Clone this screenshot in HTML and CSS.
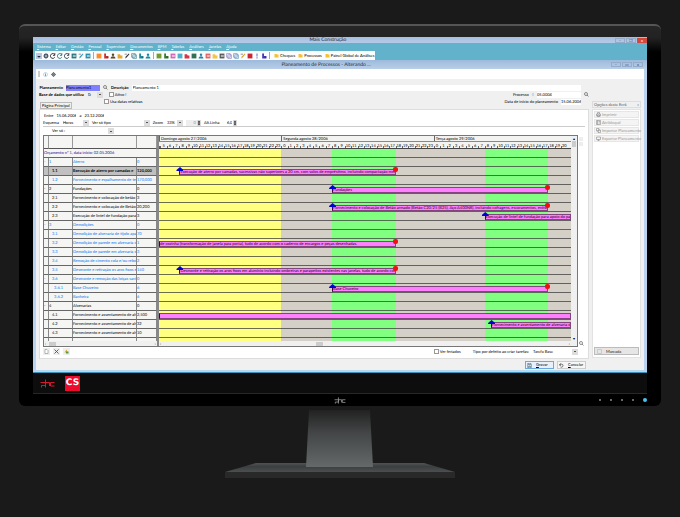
FILE: index.html
```
<!DOCTYPE html>
<html lang="pt">
    <head>
        <meta charset="utf-8">
        <title>Mais Construção</title>
        <link rel="stylesheet" href="styles.css">
    </head>
    <body>
        <div class="monitor">
            <div class="app">
                <header class="titlebar">
                    <span class="title">Mais Construção</span>
                    <div class="winButtons">
                        <button aria-label="Minimizar">–</button>
                        <button aria-label="Restaurar">❐</button>
                        <button class="close" aria-label="Fechar">x</button>
                    </div>
                </header>
                <nav class="menu">
                    <a href="#">Sistema</a>
                    <a href="#">Editar</a>
                    <a href="#">Gestão</a>
                    <a href="#">Pessoal</a>
                    <a href="#">Supervisor</a>
                    <a href="#">Documentos</a>
                    <a href="#">BPM</a>
                    <a href="#">Tabelas</a>
                    <a href="#">Análises</a>
                    <a href="#">Janelas</a>
                    <a href="#">Ajuda</a>
                </nav>
                <div class="toolbar">
                    <div class="tools" id="tools"></div>
                    <button class="shortcut"><svg viewBox="0 0 10 10"><path d="M1 2h4l1 1h3v6H1z" fill="#f2c230"/></svg>Cheques</button>
                    <button class="shortcut"><svg viewBox="0 0 10 10"><path d="M1 2h4l1 1h3v6H1z" fill="#f2c230"/></svg>Processos</button>
                    <button class="shortcut"><svg viewBox="0 0 10 10"><path d="M1 2h4l1 1h3v6H1z" fill="#f2c230"/></svg>Painel Global de Análises</button>
                </div>
                <div class="titlebar child">
                    <span class="title">Planeamento de Processos - Alterando ...</span>
                    <div class="winButtons">
                        <button aria-label="Minimizar">–</button>
                        <button aria-label="Maximizar">▭</button>
                        <button aria-label="Fechar">x</button>
                    </div>
                </div>

                <div class="window">
                    <div class="windowBar">
                        <span class="grip"></span>
                        <button aria-label="Informação"><svg viewBox="0 0 10 10"><circle cx="5" cy="5" r="4" fill="#fff" stroke="#7fb2cc"/><path d="M5 2v1M5 4v4" stroke="#2a7da5" stroke-width="1.4"/></svg></button>
                        <button aria-label="Opções"><svg viewBox="0 0 10 10"><circle cx="5" cy="5" r="3" fill="#fff" stroke="#3e5063" stroke-width="2"/><path d="M5 0v10M0 5h10" stroke="#3e5063"/></svg></button>
                    </div>
                    <div class="columns">
                        <main class="main">
                            <div class="fields">
                                <div class="line">
                                    <label class="strong first" for="plan">Planeamento</label>
                                    <input class="plan" id="plan" value="Planeamento1">
                                    <button class="search" aria-label="Procurar planeamento"><svg viewBox="0 0 10 10"><circle cx="4" cy="4" r="3"/><path d="M6 6l3 3"/></svg></button>
                                    <label class="strong" for="desc">Descrição</label>
                                    <input class="desc" id="desc" value="Planeamento 1">
                                </div>
                                <div class="line">
                                    <label class="strong first" for="base">Base de dados que utiliza</label>
                                    <select class="base" id="base"><option>G</option></select>
                                    <label class="check"><input type="checkbox">Ativo !</label>
                                    <label class="push" for="proc">Processo</label>
                                    <span class="faint">◊</span>
                                    <input class="proc" id="proc" value="05.0004">
                                    <button class="search outside" aria-label="Procurar processo"><svg viewBox="0 0 10 10"><circle cx="4" cy="4" r="3"/><path d="M6 6l3 3"/></svg></button>
                                </div>
                                <div class="line">
                                    <label class="check second"><input type="checkbox">Usa datas relativas</label>
                                    <label class="push" for="start">Data de início do planeamento</label>
                                    <input class="start" id="start" value="15.06.2006">
                                </div>
                            </div>
                            <button class="tab">Página Principal</button>
                            <section class="panel">
                                <div class="filters">
                                    <div class="line">
                                        <label for="from">Entre</label>
                                        <input class="date" id="from" value="15.06.2006">
                                        <label for="to">a</label>
                                        <input class="date" id="to" value="23.12.2006">
                                    </div>
                                    <div class="line">
                                        <label for="scheme">Esquema</label>
                                        <select class="scheme" id="scheme"><option>Horas</option></select>
                                        <label for="kind">Ver só tipo</label>
                                        <select class="kind" id="kind"><option></option></select>
                                        <label for="zoom">Zoom</label>
                                        <select class="zoom" id="zoom"><option>33%</option></select>
                                        <span class="spin off">0<svg class="arrows" viewBox="0 0 6 10"><path d="M3 1l2 3H1zM3 9L1 6h4z"/></svg></span>
                                        <label for="alt">Alt.Linha</label>
                                        <span class="spin"><input class="alt" id="alt" value="6,0"><svg class="arrows" viewBox="0 0 6 10"><path d="M3 1l2 3H1zM3 9L1 6h4z"/></svg></span>
                                    </div>
                                </div>
                                <div class="line only">
                                    <label for="only">Ver só :</label>
                                    <select class="onlySelect" id="only"><option></option></select>
                                </div>
                                <div class="planner">
                                    <div class="grid">
                                        <div class="tasks">
                                            <table>
                                                <thead><tr><th class="c1"></th><th class="c2"></th><th class="c3"></th><th class="c4"></th></tr></thead>
                                                <tbody id="tasks"></tbody>
                                            </table>
                                            <div class="hscroll"><span>‹</span><i></i><span class="end">›</span></div>
                                        </div>
                                        <div class="gantt">
                                            <div class="days" id="days"></div>
                                            <div class="hours" id="hours"></div>
                                            <div class="chart" id="chart"></div>
                                            <div class="hscroll"><span>‹</span><i class="far"></i><span class="end">›</span></div>
                                        </div>
                                        <div class="vscroll"><span>▴</span><i></i><span class="end">▾</span></div>
                                    </div>
                                    <div class="side">
                                        <i></i><i></i>
                                        <button class="search" aria-label="Procurar"><svg viewBox="0 0 10 10"><circle cx="4" cy="4" r="3"/><path d="M6 6l3 3"/></svg></button>
                                    </div>
                                </div>
                                <div class="line foot">
                                    <button class="mini" aria-label="Nova"><svg viewBox="0 0 10 10"><path d="M2 1h4l2 2v6H2z" fill="#fff" stroke="#777"/></svg></button>
                                    <button class="mini" aria-label="Apagar"><svg viewBox="0 0 10 10"><path d="M1 1l8 8M9 1L1 9" stroke="#c8201c" stroke-width="1.8"/></svg></button>
                                    <button class="mini" aria-label="Inserir"><svg viewBox="0 0 10 10"><path d="M1 7l4-6 2 6z" fill="#e0ad22"/><path d="M4 9h5V5H4z" fill="#5d9a3a"/></svg></button>
                                    <label class="check holidays"><input type="checkbox">Ver feriados</label>
                                    <label for="type">Tipo por defeito ao criar tarefas:</label>
                                    <select class="type" id="type"><option>Tarefa Base</option></select>
                                </div>
                            </section>
                            <div class="actions">
                                <button class="save"><svg viewBox="0 0 10 10"><path d="M1 1h7l1 1v7H1z" fill="#fff" stroke="#4c6475"/><path d="M3 1v3h4V1M3 9V6h4v3" fill="#9db2c0" stroke="#4c6475"/></svg><span><u>G</u>ravar</span></button>
                                <button><svg viewBox="0 0 10 10"><path d="M3 1L1 4l3 1M1 4c3-3 7-2 7 1s-3 4-5 3" fill="none" stroke="#333" stroke-width="1.3"/></svg><span><u>C</u>ancelar</span></button>
                            </div>
                        </main>
                        <aside class="options">
                            <button class="optionsHead">Opções deste Ecrã<span>»</span></button>
                            <div class="optionsBody">
                                <button disabled><svg viewBox="0 0 10 10"><path d="M3 4V1h4v3M1 4h8v4H1zM3 6h4v3H3z"/></svg>Imprimir</button>
                                <button disabled><svg viewBox="0 0 10 10"><path d="M1 1h8v8H1zM3 1v8M5 3h3M5 6h3"/></svg>Atribloqud</button>
                                <button disabled><svg viewBox="0 0 10 10"><path d="M1 1h5v5H1zM4 4h5v5H4z"/></svg>Importar Planeamento</button>
                                <button disabled><svg viewBox="0 0 10 10"><path d="M1 2h8v5H1zM5 7v2M3 9h4"/></svg>Exportar Planeamento</button>
                                <button class="marked"><svg viewBox="0 0 10 10"><path d="M1 1h8v8H1z"/></svg>Marcada</button>
                            </div>
                        </aside>
                    </div>
                </div>
            </div>
            <div class="brand">
                <svg class="phc" viewBox="0 0 30 18"><path d="M1 7h10v6H3v4M11 1v16M11 7h8v7M29 7h-8v7h8"/></svg>
                <span class="cs">CS</span>
            </div>
            <div class="chin">
                <svg class="phc small" viewBox="0 0 30 18"><path d="M1 7h10v6H3v4M11 1v16M11 7h8v7M29 7h-8v7h8"/></svg>
                <div class="leds"><i></i><i></i><i></i><i></i><i class="on"></i></div>
            </div>
        </div>
        <svg class="stand" viewBox="0 0 232 74">
            <defs>
                <linearGradient id="neck" x1="0" y1="0" x2="0" y2="1">
                    <stop offset="0" stop-color="#222"/>
                    <stop offset="0.4" stop-color="#434546"/>
                    <stop offset="1" stop-color="#656969"/>
                </linearGradient>
                <linearGradient id="foot" x1="0" y1="0" x2="0" y2="1">
                    <stop offset="0" stop-color="#505354"/>
                    <stop offset="0.4" stop-color="#3c3e3f"/>
                    <stop offset="1" stop-color="#4c4f50"/>
                </linearGradient>
            </defs>
            <path d="M32 57h168l31 9H1z" fill="url(#foot)"/>
            <path d="M1 66h230v6H1z" fill="#292929"/>
            <path d="M85 4h61l3 57H82z" fill="url(#neck)"/>
        </svg>
        <script src="script.js"></script>
    </body>
</html>
```
FILE: styles.css
```
/* Page and monitor frame */
* {
    box-sizing: border-box;
}

body {
    margin: 0;
    padding: 24px 19px 0;
    min-height: 100vh;
    background-color: #1a1a1a;
    font-family: Lato, "Liberation Sans", Arial, sans-serif;
    font-size: 4px;
    line-height: 6px;
    color: #000;
    text-rendering: geometricPrecision;
}

.monitor {
    padding: 11px 14px 0;
    border-top: 2px solid #555;
    border-radius: 6px;
    background: linear-gradient(#262626, #222 12px, #000 26px);
}

button, input, select {
    margin: 0;
    padding: 0;
    border: 0;
    min-width: 0;
    background: none;
    font: inherit;
    color: inherit;
    border-radius: 0;
    appearance: none;
    text-align: left;
}

svg {
    display: block;
    width: 5px;
    height: 5px;
    flex: none;
}

.app {
    background-color: #62b2cb;
    border-bottom: 1px solid #3d91b8;
}

/* Title bars */
.titlebar {
    display: flex;
    align-items: center;
    height: 6px;
    background: linear-gradient(#a5bfe0, #b6cae6);
    font-family: Lato, sans-serif;
    font-size: 5px;
    color: #1c2a3c;
}

.titlebar.child {
    height: 9px;
    padding-right: 4px;
    background: linear-gradient(#9dbadb, #b9cee9);
}

.title {
    flex: 1;
    padding-left: 8px;
    text-align: center;
}

.winButtons {
    display: flex;
    gap: 1px;
    font-size: 4px;
}

.winButtons button {
    width: 10px;
    height: 5px;
    line-height: 4px;
    text-align: center;
    border: 1px solid #94abc9;
    color: #445;
}

.winButtons .close {
    background-color: #d2483c;
    border-color: #d2483c;
    color: #fff;
}

/* Menu and toolbar */
.menu {
    display: flex;
    gap: 5px;
    height: 8px;
    padding-left: 4px;
    line-height: 8px;
}

.menu a {
    color: #fff;
    text-decoration: none;
}

.menu a::first-letter {
    text-decoration: underline;
}

.toolbar {
    display: flex;
    align-items: center;
    gap: 3px;
    width: fit-content;
    height: 9px;
    margin-left: 2px;
    padding-right: 1px;
    background-color: #fafcfd;
}

.tools {
    display: flex;
    align-items: center;
}

.tools button {
    display: flex;
    justify-content: center;
    width: 7px;
}

.tools svg {
    width: 6px;
    height: 6px;
}

.tools .sep {
    width: 1px;
    height: 7px;
    margin: 0 1px 0 2px;
    background-color: #7fb9cc;
}

.shortcut {
    display: flex;
    align-items: center;
    gap: 1px;
}

/* Child window */
.window {
    margin: 0 3px;
    padding-bottom: 1px;
    background-color: #f0f0f0;
    border-bottom: 2px solid #b5d9ef;
    box-shadow: -3px 0 #b9d3ee, 3px 0 #b9d3ee;
}

.windowBar {
    display: flex;
    align-items: center;
    gap: 3px;
    height: 10px;
    padding-left: 2px;
    background-color: #fff;
}

.grip {
    width: 2px;
    height: 6px;
    border: solid #ccc;
    border-width: 0 1px;
}

.columns {
    display: flex;
    gap: 3px;
    padding: 5px 3px 0;
}

.main {
    flex: 1;
    min-width: 0;
}

.line {
    display: flex;
    align-items: center;
    gap: 3px;
    height: 7px;
    white-space: nowrap;
}

.line input, .line select {
    height: 6px;
    background-color: #fff;
}

.line select {
    padding-left: 1px;
    background: linear-gradient(#555, #555) right 2px center / 2px 1px no-repeat,
        linear-gradient(#ddd, #ddd) right center / 6px 6px no-repeat, #fff;
}

.line .check {
    display: flex;
    align-items: center;
    gap: 1px;
}

.line .check input {
    width: 5px;
    height: 5px;
    border: 1px solid #999;
}

.strong {
    font-weight: bold;
}

.fields {
    padding-right: 8px;
    height: 18px;
}

.first {
    min-width: 24px;
    text-align: right;
}

.line .plan {
    width: 34px;
    background-color: #8080ff;
}

.line .desc {
    flex: 1;
    padding-left: 1px;
}

.line .base {
    width: 16px;
    background-color: #eee;
    margin-right: 3px;
}

.line .push {
    margin-left: auto;
}

.line .proc {
    width: 44px;
}

.line .start {
    width: 20px;
}

.line .second {
    margin-left: 65px;
}

.faint {
    color: #999;
}

.search svg {
    fill: none;
    stroke: #555;
    stroke-width: 1.3;
}

/* sits to the right of the field column */
.outside {
    margin-right: -8px;
}

.tab {
    display: block;
    height: 7px;
    margin: 0 0 0 1px;
    padding: 0 1px;
    border: 1px solid #bbb;
    line-height: 5px;
}

.panel {
    padding: 2px 3px;
    background-color: #fff;
    border: 1px solid #ddd;
}

.filters {
    border-bottom: 1px solid #ccc;
}

.filters .line:first-child {
    padding-left: 1px;
}

.line .date {
    width: 20px;
}

.line .scheme {
    width: 27px;
}

.line .kind {
    width: 36px;
}

.line .zoom {
    width: 17px;
}

.spin {
    display: flex;
    align-items: center;
    justify-content: flex-end;
    gap: 1px;
    width: 15px;
}

.off {
    background-color: #eee;
    color: #888;
}

.line .alt {
    width: 9px;
    text-align: right;
}

.arrows {
    width: 4px;
    height: 6px;
    background-color: #ddd;
}

.only {
    height: 8px;
    padding-left: 9px;
}

.line .onlySelect {
    width: 46px;
}

/* Task table and gantt chart */
.planner {
    display: flex;
    gap: 1px;
}

.grid {
    display: flex;
    flex: 1;
    min-width: 0;
    border: 1px solid #777;
}

.tasks {
    width: 115px;
    flex: none;
    border-right: 2px solid #888;
}

table {
    width: 100%;
    table-layout: fixed;
    border-spacing: 0;
    background-color: #f5f5f3;
}

th {
    height: 13px;
    padding: 0;
    border-bottom: 1px solid #555;
    border-right: 1px solid #999;
}

td {
    height: 9px;
    padding: 0;
    overflow: hidden;
    white-space: nowrap;
    line-height: 8px;
    border-bottom: 1px solid #666;
    border-right: 1px solid #888;
}

.c1 {
    width: 5px;
}

.c2 {
    width: 24px;
}

.c4 {
    width: 20px;
}

.budget td {
    color: #1a0a98;
}

.blue td {
    color: #0878f0;
}

.selected td {
    background-color: #c0c0c0;
    font-weight: bold;
}

.cut td {
    height: 3px;
    line-height: 3px;
    border-bottom: 0;
}

.hscroll {
    display: flex;
    align-items: center;
    gap: 3px;
    height: 5px;
    padding: 0 1px;
    line-height: 4px;
    background-color: #f0f0f0;
}

.hscroll i {
    width: 7px;
    height: 4px;
    background-color: #ccc;
}

.hscroll .far {
    margin-left: 37%;
}

.end {
    margin-left: auto;
}

.gantt {
    flex: 1;
    min-width: 0;
}

.days, .hours {
    display: flex;
    overflow: hidden;
    white-space: nowrap;
    background-color: #f3f3f1;
}

.days {
    height: 6px;
    border-bottom: 1px solid #888;
    line-height: 5px;
}

.days span {
    flex: none;
    padding-left: 1px;
    border-left: 1px solid #666;
}

.hours {
    height: 7px;
    border-bottom: 1px solid #444;
    line-height: 7px;
}

.hours span {
    flex: none;
    text-align: center;
    background: linear-gradient(#666, #666) left bottom / 1px 2px no-repeat;
}

/* night, weekend and working hours */
.chart {
    display: grid;
    grid-template-rows: repeat(21, 9px) 3px;
    overflow: hidden;
}

.row {
    min-width: 0;
    border-bottom: 1px solid rgba(60, 60, 60, 0.75);
}

.row:last-child {
    border-bottom: 0;
}

.bar {
    position: relative;
    top: 2px;
    height: 6px;
    border: 1px solid #84447f;
    border-left-color: #404;
    background-color: #ff80ff;
    line-height: 4px;
    color: #200020;
}

.bar span {
    display: block;
    overflow: hidden;
    white-space: nowrap;
}

.from::before {
    content: "";
    position: absolute;
    left: -4px;
    top: -3px;
    width: 7px;
    height: 4px;
    background-color: #0000d8;
    clip-path: polygon(50% 0, 100% 75%, 100% 100%, 0 100%, 0 75%);
}

.until::after {
    content: "";
    position: absolute;
    right: -3px;
    top: -3px;
    width: 5px;
    height: 5px;
    background-color: #f01010;
    border-radius: 2px;
}

.vscroll {
    display: flex;
    flex-direction: column;
    width: 6px;
    line-height: 5px;
    text-align: center;
    background-color: #f0f0f0;
}

.vscroll i {
    height: 6px;
    margin: 0 1px;
    background-color: #ccc;
}

.vscroll .end {
    margin: auto 0 5px;
}

.side {
    display: flex;
    flex-direction: column;
    gap: 1px;
    width: 6px;
    padding-top: 2px;
}

.side i {
    height: 4px;
    width: 4px;
    background-color: #eee;
}

.side .search {
    margin: auto 0 1px;
}

.foot {
    height: 9px;
    padding-right: 7px;
}

.mini {
    padding: 1px;
    background-color: #eee;
}

.holidays {
    margin-left: auto;
    margin-right: 9px;
}

.line .type {
    width: 46px;
}

.actions {
    display: flex;
    justify-content: flex-end;
    gap: 3px;
    padding: 2px 3px 0 0;
}

.actions button {
    display: flex;
    align-items: center;
    gap: 4px;
    width: 29px;
    height: 8px;
    padding-left: 1px;
    border: 1px solid #ccc;
    background-color: #f6f6f6;
}

.actions .save {
    border-color: #6aaae0;
    background-color: #e8f1fa;
}

/* Options on the right */
.options {
    display: flex;
    flex-direction: column;
    width: 49px;
    padding: 17px 0 11px;
}

.optionsHead {
    display: flex;
    justify-content: space-between;
    height: 7px;
    padding: 0 1px;
    border: 1px solid #ddd;
    line-height: 5px;
    color: #555;
}

.optionsBody {
    display: flex;
    flex: 1;
    flex-direction: column;
    gap: 1px;
    margin-top: 1px;
    padding: 1px 1px 2px;
    background-color: #fff;
    border: 1px solid #e2e2e2;
}

.optionsBody button {
    display: flex;
    align-items: center;
    gap: 1px;
    height: 7px;
    padding-left: 1px;
    background-color: #f4f4f4;
    border: 1px solid #e6e6e6;
    line-height: 5px;
    color: #999;
    white-space: nowrap;
}

.optionsBody svg {
    fill: none;
    stroke: #777;
}

.optionsBody .marked {
    gap: 4px;
    height: 8px;
    margin-top: auto;
    padding-left: 2px;
    background-color: #e6e6e6;
    border-color: #bbb;
    color: #222;
}

.optionsBody .marked svg {
    stroke: #9ab0e0;
}

/* Bottom of the monitor */
.brand {
    display: flex;
    align-items: center;
    gap: 10px;
    height: 21px;
    padding-left: 7px;
    background-color: #0d0d0d;
    border-bottom: 1px solid #2a2626;
}

.phc {
    width: 15px;
    height: 9px;
    fill: none;
    stroke: #d5182c;
    stroke-width: 2;
}

.phc.small {
    grid-column: 2;
    width: 12px;
    height: 7px;
    stroke: #999;
}

.cs {
    width: 15px;
    height: 15px;
    background-color: #ec0b2c;
    color: #fff;
    font: bold 9px/15px "DejaVu Sans", sans-serif;
    text-align: center;
}

.chin {
    display: grid;
    grid-template-columns: 1fr auto 1fr;
    align-items: center;
    height: 12px;
}

.leds {
    display: flex;
    align-items: center;
    justify-content: flex-end;
    gap: 9px;
}

.leds i {
    width: 2px;
    height: 2px;
    border-radius: 50%;
    background-color: #888;
}

.leds .on {
    width: 4px;
    height: 4px;
    background-color: #4cc0ea;
}

.stand {
    width: 232px;
    height: 74px;
    margin: 0 auto;
}
```
FILE: script.js
```
/* The chart starts shortly before 5h on Sunday, hours are counted from Sunday 0h */
const firstHour = 4.78;
const hoursShown = 64.78;

/* number, description, quantity, style, group number, bar [start, end, text] */
const tasks = [
    ["", "Aterro", "0", "blue", "1"],
    ["1.1", "Execução de aterro por camadas  e", "120,000", "selected", "", [8, 42, "Execução de aterro por camadas, sucessivas não superiores a 20 cm, com solos de empréstimo, incluindo compactação mecânica e rega e"]],
    ["1.2", "Fornecimento e espalhamento de terra v", "170,000", "blue", ""],
    ["", "Fundações", "0", "", "2", [32, 66, "Fundações"]],
    ["2.1", "Fornecimento e colocação de betão de li", "3", "", ""],
    ["2.2", "Fornecimento  e colocação de Betão arm", "20,200", "", "", [32, 66, "Fornecimento  e colocação de Betão armado (Betão C20/25 (B25), Aço A400NR), incluindo cofragens, escoramentos, entivações, todos os"]],
    ["2.3", "Execução de lintel de fundação para apo", "3", "", "", [56, null, "Execução de lintel de fundação para apoio do pano exterior"]],
    ["", "Demolições", "0", "blue", "3"],
    ["3.1", "Demolição de alvenaria de tijolo aparente", "70", "blue", ""],
    ["3.2", "Demolição de parede em alvenaria de tij", "1", "blue", "", [null, 42, "de cozinha (transformação de janela para porta), tudo de acordo com o caderno de encargos e peças desenhadas."]],
    ["3.3", "Demolição de parede em alvenaria de tij", "3", "blue", ""],
    ["3.4", "Remoção de cimento cola e/ou reboque -", "2", "blue", ""],
    ["3.5", "Desmonte e retiração os aros fixos em a", "140", "blue", "", [8, 42, "Desmonte e retiração os aros fixos em alumínio incluindo ombreiras e parapeitos existentes nas janelas, tudo de acordo com o caderno de e"]],
    ["3.6", "Desmonte e remoção das loiças sanitári", "0", "blue", ""],
    ["3.6.1", "Base Chuveiro", "6", "blue", "", [32, 66, "Base Chuveiro"]],
    ["3.6.2", "Banheira", "6", "blue", ""],
    ["", "Alvenarias", "0", "", "4"],
    ["4.1", "Fornecimento e assentamento de alvena", "2,500", "", "", [null, null, ""]],
    ["4.2", "Fornecimento e assentamento de alvena", "32", "", "", [57, null, "Fornecimento e assentamento de alvenaria de tijolo"]],
    ["4.3", "Fornecimento e assentamento de alvena", "10", "", ""],
    ["", "", "", "cut", ""]
];

const percent = hours => hours / hoursShown * 100;

/* Fill the table on the left and the rows of the chart */
const tbody = document.querySelector("#tasks");
const chart = document.querySelector("#chart");
let tableRows = '<tr class="budget"><td colspan="4">Orçamento nº 1, data início: 02.05.2006</td></tr>';
let chartRows = '<div class="row"></div>';

tasks.forEach(([number, text, amount, style, group, bar]) => {
    const closed = group || number === "3.6" ? "-" : "";
    const indent = "&nbsp;".repeat(number.length > 3 ? 5 : 3);
    const label = group || indent + number;
    tableRows += `<tr class="${style}"><td>${closed}</td><td>${label}</td><td>${text}</td><td>${amount}</td></tr>`;

    let barHtml = "";
    if (bar) {
        const start = bar[0] === null ? firstHour : bar[0];
        const end = bar[1] === null ? firstHour + hoursShown : bar[1];
        const ends = (bar[0] === null ? "" : " from") + (bar[1] === null ? "" : " until");
        barHtml = `<div class="bar${ends}" style="margin-left:${percent(start - firstHour)}%;width:${percent(end - start)}%"><span>${bar[2]}</span></div>`;
    }
    chartRows += `<div class="row">${barHtml}</div>`;
});
tbody.innerHTML = tableRows;
chart.innerHTML = chartRows;

/* Background bands: Sunday yellow, working hours green */
const bands = [[firstHour, 24, "#ffff80"], [24, 32, "#d4d0c8"], [32, 42, "#80ff80"], [42, 56, "#d4d0c8"], [56, 66, "#80ff80"], [66, 70, "#d4d0c8"]];
chart.style.background = "linear-gradient(to right," + bands.map(([a, b, color]) =>
    `${color} ${percent(a - firstHour)}% ${percent(b - firstHour)}%`).join(",") + ")";

/* Day and hour headers */
const days = [["Domingo agosto 27/2006", firstHour, 24], ["Segunda agosto 28/2006", 24, 48], ["Terça agosto 29/2006", 48, firstHour + hoursShown]];
document.querySelector("#days").innerHTML = days.map(([name, a, b]) =>
    `<span style="width:${percent(b - a)}%">${name}</span>`).join("");

let hours = `<span style="width:${percent(5 - firstHour)}%"></span>`;
for (let h = 5; h < 69; h++) {
    hours += `<span style="width:${percent(1)}%">${h % 24}</span>`;
}
document.querySelector("#hours").innerHTML = hours;

/* Toolbar icons */
const shapes = {
    down: '<path d="M0 0h10v10H0z" fill="#b9c6e4"/><path d="M2 5h6L5 8z"/>',
    target: '<circle cx="5" cy="5" r="3" fill="none" stroke="currentColor" stroke-width="2"/><path d="M5 1v8M1 5h8" stroke="currentColor"/>',
    turn: '<path d="M8 3a4 4 0 1 0 0 4M8 0v4H5" fill="none" stroke="currentColor" stroke-width="1.5"/>',
    page: '<path d="M1 1h8v8H1z"/><path d="M3 4h5M3 6h5" stroke="#fff"/>',
    box: '<path d="M1 1h8v8H1z"/>',
    chart: '<path d="M2 1h3v4h4v4H2z"/><path d="M6 7h3" stroke="#333"/>',
    person: '<circle cx="5" cy="3" r="2"/><path d="M1 9c0-5 8-5 8 0z"/>',
    pen: '<path d="M2 9l1-3 5-5 1 1-5 6z"/><path d="M1 2h4" stroke="#555"/>',
    folder: '<path d="M1 2h4l1 2h3v5H1z"/>',
    copy: '<path d="M1 1h6v6H1zM3 3h6v6H3z" fill="#fff" stroke="currentColor"/>',
    bang: '<path d="M5 1v5M5 7v2" stroke="currentColor" stroke-width="2"/>'
};
const tools = [
    ["down", "#223"], ["target", "#456"], ["turn", "#333"], ["turn", "#287d8b"], ["turn", "#345"], ["page", "#25737a"], ["pen", "#2d97b0"], ["page", "#268aa6"], null,
    ["box", "#ff8a2b"], ["chart", "#c63430"], ["person", "#5c4925"], ["folder", "#e5aa32"], ["pen", "#333"], ["copy", "#287585"], ["chart", "#208da2"], ["person", "#158ba0"], null,
    ["box", "#739b2e"], ["chart", "#377c31"], ["page", "#ce62b6"], ["box", "#4bb1c8"], ["folder", "#d73345"], ["box", "#316f58"], ["person", "#2784a9"], ["page", "#db6261"], ["folder", "#f1c443"], ["page", "#555"], ["copy", "#7e70b8"], ["copy", "#4682b4"], ["pen", "#d2a624"], ["box", "#c82735"], ["bang", "#7a84cc"], ["chart", "#4538b8"], null
];
document.querySelector("#tools").innerHTML = tools.map(tool => tool
    ? `<button aria-label="${tool[0]}"><svg viewBox="0 0 10 10" fill="currentColor" color="${tool[1]}">${shapes[tool[0]]}</svg></button>`
    : '<span class="sep"></span>').join("");
```
